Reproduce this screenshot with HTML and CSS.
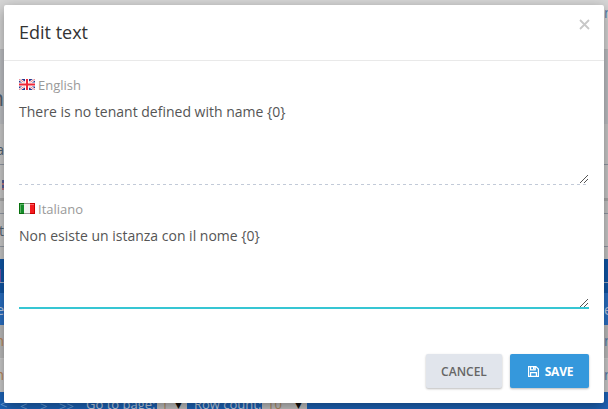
FILE: index.html
```html
<!DOCTYPE html>
<html lang="en">
<head>
<meta charset="utf-8">
<title>Edit text</title>
<link rel="stylesheet" href="styles.css">
</head>
<body>
<main class="page">
  <div class="row top"><span></span><span class="blue">n</span></div>
  <div class="row heading"><span>n</span></div>
  <div class="row label"><span>a</span></div>
  <div class="row language"><i class="mini-flag"></i></div>
  <div class="row gap"></div>
  <div class="row filter"><span>t</span></div>
  <div class="row space"></div>
  <div class="row grid-title"><i class="accent"></i></div>
  <div class="row grid-head"><span>e</span><span>e</span></div>
  <div class="row item"><span>h</span><span class="blue">n</span></div>
  <div class="row item alt"><span>h</span><span class="blue">n</span></div>
  <div class="row pager">
    <span class="arrow a1">&lt;</span><span class="arrow a2">&lt;</span><span class="arrow a3">&gt;</span><span class="arrow a4">&gt;&gt;</span>
    <span class="go">Go to page:</span><span class="select s1">1<b>▼</b></span>
    <span class="count">Row count:</span><span class="select s2">10<b>▼</b></span>
  </div>
</main>
<section class="modal" role="dialog">
  <header class="modal-header">
    <h4>Edit text</h4>
    <svg class="close" width="11" height="11" viewBox="0 0 11 11"><path d="M1 1l9 9M10 1l-9 9"/></svg>
  </header>
  <div class="modal-body">
    <div class="field">
      <label><svg class="flag" width="16" height="11" viewBox="0 0 16 11">
        <path fill="#27348b" d="M0 0h16v11H0z"/>
        <path stroke="#fff" stroke-width="2.4" d="M0 0l16 11M16 0L0 11"/>
        <path stroke="#e4606c" stroke-width=".8" d="M0 0l16 11M16 0L0 11"/>
        <path fill="#fff" d="M6 0h4v11H6zM0 3.5h16v4H0z"/>
        <path fill="#ee2639" d="M7 0h2v11H7zM0 4.5h16v2H0z"/>
      </svg>English</label>
      <div class="area">There is no tenant defined with name {0}<svg class="grip" width="8" height="8" viewBox="0 0 8 8"><path d="M0 7h1v1H0zM1 6h1v1H1zM2 5h1v1H2zM3 4h1v1H3zM4 3h1v1H4zM5 2h1v1H5zM6 1h1v1H6zM7 0h1v1H7zM4 7h1v1H4zM5 6h1v1H5zM6 5h1v1H6zM7 4h1v1H7z"/></svg></div>
    </div>
    <div class="field">
      <label><svg class="flag" width="16" height="11" viewBox="0 0 16 11">
        <path fill="#168b2a" d="M0 0h5v11H0z"/><path fill="#f3f3f3" d="M5 0h6v11H5z"/><path fill="#f51c20" d="M11 0h5v11h-5z"/>
        <path fill="#5cb565" d="M1 1h4v1H2v8H1z"/><path fill="#ff6468" d="M11 1h4v1h-4z"/>
        <path fill="#08700d" d="M0 0h5v1H1v9h4v1H0z"/><path fill="#999" d="M5 0h6v1H5zM5 10h6v1H5z"/><path fill="#c90000" d="M11 0h5v11h-5v-1h4V1h-4z"/>
      </svg>Italiano</label>
      <div class="area focused">Non esiste un istanza con il nome {0}<svg class="grip" width="8" height="8" viewBox="0 0 8 8"><path d="M0 7h1v1H0zM1 6h1v1H1zM2 5h1v1H2zM3 4h1v1H3zM4 3h1v1H4zM5 2h1v1H5zM6 1h1v1H6zM7 0h1v1H7zM4 7h1v1H4zM5 6h1v1H5zM6 5h1v1H6zM7 4h1v1H7z"/></svg></div>
    </div>
  </div>
  <footer class="modal-footer">
    <button class="btn cancel">CANCEL</button>
    <button class="btn save"><svg width="11" height="11" viewBox="0 0 11 11"><path d="M.6.6h7.3l2.5 2.5v7.3H.6zM2.6.6v3.2h4.6V.6M2.6 10.4V6.6h5.8v3.8"/><path class="solid" d="M5 .8h1.6v2.4H5z"/></svg>SAVE</button>
  </footer>
</section>
</body>
</html>
```
FILE: styles.css
```css
* { box-sizing: border-box; }
body { margin: 0; font-family: "Open Sans", sans-serif; overflow: hidden; }
.page { width: 608px; height: 409px; display: grid; grid-template-rows: 50px 74px 41px 36px 13px 33px 12px 34px 32px 34px 33px 17px; background: #c6c6c6; }
.row { display: flex; justify-content: space-between; overflow: hidden; font-size: 14px; line-height: 30px; color: #526372; border-bottom: 1px solid #9299a5; }
.row > span:first-child { width: 4px; direction: rtl; white-space: nowrap; }
.row > span + span { width: 4px; }
.row .blue { color: #557dac; }
.top { background: #d6d6d6; border-color: #bdbdbf; line-height: 26px; }
.heading { background: #bec0c4; border: 0; font-size: 22px; line-height: 94px; }
.label { background: #cacaca; line-height: 52px; }
.language { background: #c9c9c9; border-bottom: 3px solid #aaa; }
.mini-flag { width: 2px; height: 10px; margin: 15px 0 0 2px; background: repeating-linear-gradient(#59639b 0 3px, #bb7884 3px 5px); }
.gap { border-color: #9299a5; }
.filter { background: #cacaca; line-height: 34px; }
.space { border: 0; }
.grid-title { background: #1056a6; border-color: #9cabc4; height: 24px; }
.accent { width: 1px; height: 14px; margin-top: 10px; background: #7750a5; }
.grid-head { background: #2a70c4; border-top: 10px solid #1056a6; border-bottom: 0; margin-top: -10px; color: #bbcce4; line-height: 34px; }
.item { background: #bcbcbc; border-color: #d0d0d0; color: #bd8657; line-height: 32px; }
.alt { background: #cbcbcb; border: 0; }
.row.pager { position: relative; border: 0; background: #1d64b9; color: #c3d3e6; font-size: 13px; line-height: 18px; }
.pager > span, .row.pager > span:first-child { position: absolute; top: 3px; width: auto; direction: ltr; white-space: nowrap; }
.row.pager > .arrow { color: #68a0dd; top: 5px; }
.row.pager .a1 { left: 0; }
.pager > .a2 { left: 20px; }
.pager > .a3 { left: 40px; }
.pager > .a4 { left: 59px; }
.pager > .go { left: 86px; }
.pager > .count { left: 194px; }
.pager > .select { display: flex; justify-content: space-between; background: #c4c4c4; color: #b08c65; }
.pager > .s1 { left: 157px; width: 30px; padding-left: 4px; }
.pager > .s2 { left: 262px; width: 45px; padding-left: 5px; }
.select b { color: #111; font: 9px/20px "DejaVu Sans", sans-serif; padding-right: 5px; }
.modal { position: absolute; left: 4px; top: 5px; width: 600px; height: 398px; background: #fff; border-radius: 2px; box-shadow: 0 4px 13px rgba(0, 0, 0, .38); display: flex; flex-direction: column; }
.modal-header { height: 56px; padding: 14px 15px 0; display: flex; justify-content: space-between; border-bottom: 1px solid #e9e9e9; }
h4 { margin: 0; font-size: 18px; line-height: 26px; font-weight: 400; color: #333; }
.close { margin: 0 -1px 0 0; fill: none; stroke: #c8c8c8; stroke-width: 1.8; }
.modal-body { flex: 1; padding: 14px 15px 0; }
.field { height: 124px; }
label { display: flex; align-items: center; gap: 3px; height: 20px; font-size: 13px; color: #999; }
.flag { margin-top: -2px; }
.area { position: relative; height: 90px; padding-top: 7px; font-size: 14px; line-height: 20px; color: #555; background: repeating-linear-gradient(90deg, #c2cad8 0 3px, transparent 3px 6px) bottom / 100% 1px no-repeat; }
.focused { background: none; border-bottom: 2px solid #36c6d3; }
.grip { position: absolute; right: 1px; bottom: 2px; fill: #555; shape-rendering: crispEdges; }
.focused .grip { bottom: 0; }
.modal-footer { display: flex; justify-content: flex-end; gap: 8px; padding: 0 15px 15px; }
.btn { height: 34px; padding: 0; border: 0; border-radius: 2px; font: 600 12px "Open Sans", sans-serif; display: flex; align-items: center; justify-content: center; box-shadow: 0 1px 3px rgba(0, 0, 0, .1), 0 1px 2px rgba(0, 0, 0, .18); }
.cancel { width: 76px; background: #e1e5ec; color: #666; }
.save { width: 79px; padding-left: 2px; background: #3598dc; color: #fff; gap: 6px; font-weight: 700; letter-spacing: -.2px; }
.save svg { fill: none; stroke: #fff; stroke-width: 1.2; }
.save .solid { fill: #fff; stroke: none; }
```
